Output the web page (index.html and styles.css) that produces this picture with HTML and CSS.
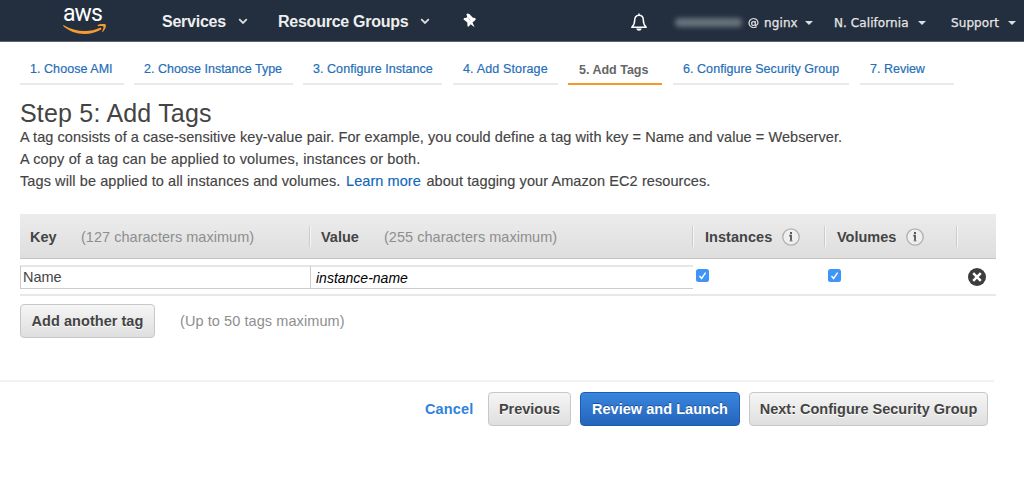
FILE: index.html
```html
<!DOCTYPE html>
<html lang="en">
<head>
<meta charset="utf-8">
<title>Step 5: Add Tags</title>
<link rel="stylesheet" href="styles.css">
</head>
<body>
<header class="topbar">
  <a class="logo">
    <span class="logo-word">aws</span>
    <svg class="logo-smile" width="44" height="11" viewBox="0 0 44 11"><path d="M.4.900C12 8 26 9 37.600 3.500L38.600 5.200C27 12.600 10 11.400 0 1.800z" fill="#f79a2f"/><path d="M34.600 1.100C37.400-.4 42.300-.3 42.800.7c.5 1.300-.6 5-3 7.200l-.8-.4c.9-2 1.900-4.200 1.300-5.100-.7-.7-3.500-.5-5.400-.2z" fill="#f79a2f"/></svg>
  </a>
  <a class="menu services"><span>Services</span><svg class="chev" width="10" height="7" viewBox="0 0 10 7"><path d="M1.200 1.200 5 5l3.800-3.800"/></svg></a>
  <a class="menu groups"><span>Resource Groups</span><svg class="chev" width="10" height="7" viewBox="0 0 10 7"><path d="M1.200 1.200 5 5l3.800-3.800"/></svg></a>
  <svg class="pin" width="14" height="15" viewBox="0 0 14 15"><path d="M.4 6.200 1.200 5 3.600 4.700 4.200 3.300 3.300 1.600 4.400.6 6.300 1 10 4.700 12.300 5 12.700 6.700 9.500 9.400 11.600 14.200 7.700 11.200 5.500 13.700 4.500 13.200 4.300 9.600z" fill="#fff"/><path d="M5.200 4.500 7.400 7.600" stroke="#8a929c" stroke-width=".6"/></svg>
  <svg class="bell" width="18" height="19" viewBox="0 0 18 19"><path d="M9 2.200C5.900 2.200 4.700 4.600 4.700 7c0 4.300-1 5.500-2.900 7.300h14.400c-1.900-1.800-2.900-3-2.900-7.300 0-2.400-1.200-4.800-4.300-4.800zM9 .6v1.600" fill="none" stroke="#fff" stroke-width="1.500" stroke-linejoin="round"/><path d="M6.300 15.400h5.400c-.5 3-4.900 3-5.400 0z" fill="#fff"/></svg>
  <a class="small account"><i class="masked"></i><b class="at">@</b><span>nginx</span><i class="caret"></i></a>
  <a class="small region"><span>N. California</span><i class="caret"></i></a>
  <a class="small support"><span>Support</span><i class="caret"></i></a>
</header>

<nav class="tabs">
  <a class="tab tab-ami">1. Choose AMI</a>
  <a class="tab tab-type">2. Choose Instance Type</a>
  <a class="tab tab-instance">3. Configure Instance</a>
  <a class="tab tab-storage">4. Add Storage</a>
  <a class="tab tab-tags active">5. Add Tags</a>
  <a class="tab tab-security">6. Configure Security Group</a>
  <a class="tab tab-review">7. Review</a>
</nav>

<main class="content">
  <h1 class="title">Step 5: Add Tags</h1>
  <div class="intro">
    <p class="line l1"><span>A tag consists of a case-sensitive key-value pair. For example, you could define a tag with key = Name and value = Webserver.</span></p>
    <p class="line l2"><span>A copy of a tag can be applied to volumes, instances or both.</span></p>
    <p class="line l3"><span>Tags will be applied to all instances and volumes.</span> <a class="link">Learn more</a> <span>about tagging your Amazon EC2 resources.</span></p>
  </div>

  <section class="table">
    <div class="row head">
      <div class="cell"><b class="key">Key</b><span class="hint">(127 characters maximum)</span></div>
      <div class="cell"><b class="value">Value</b><span class="hint">(255 characters maximum)</span></div>
      <div class="cell toggle"><b class="inst">Instances</b><svg class="info" width="18" height="18" viewBox="0 0 18 18"><circle cx="9" cy="9" r="8.200" fill="#efefef" stroke="#b0b0b0" stroke-width="1.300"/><path d="M7.300 7.600H9V13.200" fill="none" stroke="#555" stroke-width="1.800"/><path d="M7.300 12.900h3.600" stroke="#999" stroke-width=".8"/><rect x="8" y="4" width="2" height="2" fill="#555"/></svg></div>
      <div class="cell toggle"><b class="vol">Volumes</b><svg class="info" width="18" height="18" viewBox="0 0 18 18"><circle cx="9" cy="9" r="8.200" fill="#efefef" stroke="#b0b0b0" stroke-width="1.300"/><path d="M7.300 7.600H9V13.200" fill="none" stroke="#555" stroke-width="1.800"/><path d="M7.300 12.900h3.600" stroke="#999" stroke-width=".8"/><rect x="8" y="4" width="2" height="2" fill="#555"/></svg></div>
      <div class="cell last"></div>
    </div>
    <div class="row entry">
      <div class="field name"><span>Name</span></div>
      <div class="field val"><span>instance-name</span></div>
      <div class="check"><svg width="13" height="13" viewBox="0 0 13 13"><rect width="13" height="13" rx="2.500" fill="#3f94f8"/><path d="m3.500 7 2.100 2.500L9.600 3.600" fill="none" stroke="#fff" stroke-width="1.400"/></svg></div>
      <div class="check"><svg width="13" height="13" viewBox="0 0 13 13"><rect width="13" height="13" rx="2.500" fill="#3f94f8"/><path d="m3.500 7 2.100 2.500L9.600 3.600" fill="none" stroke="#fff" stroke-width="1.400"/></svg></div>
      <div class="remove"><svg width="18" height="18" viewBox="0 0 18 18"><circle cx="9" cy="9" r="9" fill="#3d3d3d"/><path d="m5.200 5.200 7.600 7.600m0-7.600-7.600 7.600" stroke="#fff" stroke-width="2.500"/></svg></div>
    </div>
  </section>

  <div class="add">
    <button class="btn b-add"><span>Add another tag</span></button>
    <span class="hint limit">(Up to 50 tags maximum)</span>
  </div>
</main>

<footer class="actions">
  <a class="cancel">Cancel</a>
  <button class="btn b-prev"><span>Previous</span></button>
  <button class="btn primary b-review"><span>Review and Launch</span></button>
  <button class="btn b-next"><span>Next: Configure Security Group</span></button>
</footer>
</body>
</html>
```
FILE: styles.css
```css
* { box-sizing: border-box; }
body {
  margin: 0;
  height: 483px;
  overflow: hidden;
  background: #fff;
  color: #444;
  font: 14.5px/22px "Liberation Sans", Arial, sans-serif;
  white-space: nowrap;
}
svg { display: block; flex: none; }
i { font-style: normal; }

.topbar {
  display: flex;
  height: 42px;
  background: #232f3e;
  border-bottom: 1px solid #5b6470;
  color: #eee;
}
.logo { width: 162px; padding-left: 63px; }
.logo-word {
  display: block;
  height: 24px;
  font: 400 23px/27px Roboto, "Noto Sans", sans-serif;
  letter-spacing: -.9px;
  color: #fff;
}
.menu {
  display: flex;
  align-items: center;
  justify-content: space-between;
  height: 43px;
  font-size: 16px;
  font-weight: bold;
  letter-spacing: -.25px;
}
.services { width: 86px; }
.groups { width: 152px; margin-left: 30px; }
.chev path { fill: none; stroke: #ddd; stroke-width: 1.8; }
.pin { margin: 13px 0 0 33px; }
.bell { margin: 13px 0 0 153px; }
.small {
  display: flex;
  align-items: center;
  height: 45px;
  font: 12px "DejaVu Sans", sans-serif;
  letter-spacing: .08px;
  color: #e6e6e6;
  -webkit-text-stroke: .25px #e6e6e6;
}
.account { width: 138px; margin-left: 27px; }
.masked {
  width: 67px;
  height: 9px;
  border-radius: 4px;
  background: #68727d;
  filter: blur(2.5px);
}
.at { margin: 0 5px 0 6px; font-size: 11px; font-weight: normal; filter: blur(.6px); }
.region { width: 92px; margin-left: 21px; }
.support { width: 65px; margin-left: 25px; }
.caret {
  margin-left: auto;
  border: 4px solid transparent;
  border-top-color: #ddd;
  border-bottom: 0;
}

.tabs { display: flex; height: 43px; padding-left: 20px; }
.tab {
  height: 43px;
  padding: 16px 0 0 10px;
  border-bottom: 2px solid #eaeaea;
  color: #1f6fb9;
  font-size: 12.5px;
  letter-spacing: .05px;
  margin-right: 10px;
  -webkit-text-stroke: .2px #1f6fb9;
}
.tab-ami { width: 104px; }
.tab-type { width: 159px; letter-spacing: 0; }
.tab-instance { width: 139px; margin-right: 11px; }
.tab-storage { width: 105px; letter-spacing: .15px; }
.tab-tags { width: 94px; margin-right: 11px; }
.tab-security { width: 176px; margin-right: 11px; }
.tab-review { width: 94px; letter-spacing: 0; }
.tab.active {
  padding: 17px 0 0 11px;
  color: #666;
  font-weight: bold;
  letter-spacing: 0;
  border-color: #f7982d;
  -webkit-text-stroke: 0;
}

.content { width: 996px; padding-left: 20px; }
.title { margin: 0; padding-top: 14px; height: 41px; font: 25px/28px "Liberation Sans", sans-serif; letter-spacing: .2px; }
.line { margin: 0; height: 22px; letter-spacing: .067px; -webkit-text-stroke: .15px #444; }
.l2 { letter-spacing: .155px; }
.l3 { letter-spacing: .09px; }
.link { margin: 0 1.5px; color: #1166bb; letter-spacing: .05px; -webkit-text-stroke: .15px #1166bb; }

.row { display: grid; grid-template-columns: 290px 383px 132px 131px 40px; }
.table { margin-top: 22px; }
.head {
  height: 45px;
  border-bottom: 1px solid #c4c4c4;
  background: linear-gradient(#ececec, #dedede);
}
.cell { display: flex; align-items: center; height: 21px; margin-top: 12px; padding-left: 10px; }
.cell + .cell { margin-left: -1px; border-left: 1px solid #ccc; box-shadow: inset 1px 0 #f6f6f6; padding-left: 11px; }
.cell + .toggle { padding-left: 12px; }
.cell + .last { margin-left: 0; }
.hint { color: #8e8e8e; letter-spacing: .03px; }
.key { width: 51px; }
.value { width: 63px; }
.inst { width: 77px; letter-spacing: .05px; }
.vol { width: 69px; }
.entry { height: 37px; padding-top: 6px; border-bottom: 2px solid #e8e8e8; }
.field { height: 24px; border: 1px solid #ccc; border-top: 2px solid #e6e6e6; border-right: 0; padding-left: 2px; line-height: 20px; }
.val { padding-left: 5px; font-size: 14px; font-style: italic; color: #000; line-height: 23px; }
.check { padding: 4px 0 0 3px; }
.remove { padding: 3px 0 0 12px; }

.add { display: flex; align-items: center; margin-top: 8px; }
.limit { margin-left: 25px; letter-spacing: .08px; }
.btn {
  height: 34px;
  padding: 0;
  border: 1px solid #c7c7c7;
  border-radius: 4px;
  background: linear-gradient(#f5f5f5, #dfdfdf);
  color: #444;
  font: bold 14.5px "Liberation Sans", sans-serif;
  text-shadow: 0 1px #fff;
}
.b-add { width: 135px; letter-spacing: .04px; }

.actions {
  display: flex;
  align-items: center;
  width: 994px;
  height: 56px;
  margin-top: 42px;
  border-top: 2px solid #f2f2f2;
  padding-left: 425px;
}
.cancel { width: 63px; font-weight: bold; letter-spacing: .15px; color: #2f83dd; }
.b-prev { width: 83px; }
.b-review { width: 160px; margin: 0 9px; letter-spacing: .04px; }
.b-next { width: 239px; }
.primary {
  border-color: #1d5cb2;
  background: linear-gradient(#3a86dc, #2464bd);
  color: #fff;
  text-shadow: 0 -1px #1d4f95;
}
```
